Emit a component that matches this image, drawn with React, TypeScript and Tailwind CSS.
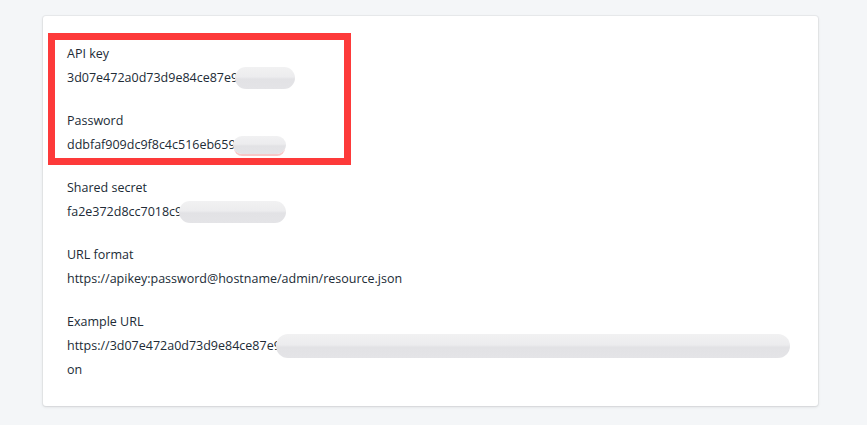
import React from "react";

function Blob({ w, h = 20, className = "" }: { w: number; h?: number; className?: string }) {
  return (
    <span
      className={
        "inline-block align-middle rounded-full bg-[linear-gradient(180deg,#f1f1f2_0%,#ececee_45%,#e2e2e5_55%,#e4e4e7_100%)] blur-[0.6px] " +
        className
      }
      style={{ width: w, height: h }}
    />
  );
}

function Field({ label, children }: { label: string; children: React.ReactNode }) {
  return (
    <div>
      <div className="h-6 leading-6">{label}</div>
      <div className="flex h-6 items-center whitespace-nowrap leading-6">{children}</div>
    </div>
  );
}

export default function App() {
  return (
    <div
      className="min-h-[425px] w-full bg-[#f4f6f8] pt-4 pl-[43px] pr-[49px] pb-[19px] text-[12.5px] text-[#212b36]"
      style={{ fontFamily: '"Open Sans", "Noto Sans", sans-serif' }}
    >
      <div className="relative flex flex-col gap-[19px] rounded-[3px] bg-white pt-[26px] pb-[24px] pl-6 pr-6 shadow-[0_0_0_1px_rgba(63,63,68,0.05),0_1px_3px_0_rgba(63,63,68,0.15)]">
        <div className="pointer-events-none absolute left-[5px] top-[17px] h-[132px] w-[303px] border-[7px] border-[#fd3a3a]" />
        <Field label="API key">
          <span>3d07e472a0d73d9e84ce87e9</span>
          <Blob w={60} h={22} className="-ml-[3px]" />
        </Field>
        <Field label="Password">
          <span>ddbfaf909dc9f8c4c516eb659</span>
          <Blob w={53} h={18} className="-ml-[3px] shadow-[0_3px_0_-1px_#f7c8c8]" />
        </Field>
        <Field label="Shared secret">
          <span>fa2e372d8cc7018c9</span>
          <Blob w={107} h={22} className="-ml-[3px]" />
        </Field>
        <Field label="URL format">https://apikey:password@hostname/admin/resource.json</Field>
        <div>
          <div className="h-6 leading-6">Example URL</div>
          <div className="flex h-6 items-center whitespace-nowrap leading-6">
            <span>https://3d07e472a0d73d9e84ce87e9</span>
            <Blob w={514} h={24} className="-ml-[5px]" />
          </div>
          <div className="h-6 leading-6">on</div>
        </div>
      </div>
    </div>
  );
}
